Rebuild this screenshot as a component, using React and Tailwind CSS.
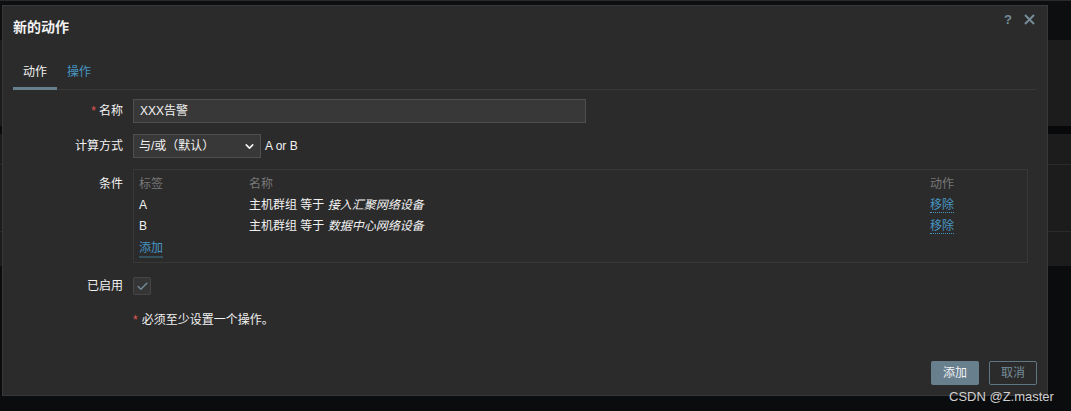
import React from 'react';
import { ChevronDown, Check } from 'lucide-react';

const font = { fontFamily: '"Liberation Sans", "Noto Sans CJK SC", sans-serif' };

const conditions = [
  { tag: 'A', value: '接入汇聚网络设备' },
  { tag: 'B', value: '数据中心网络设备' },
];

const Backdrop = () => (
  <div className="absolute inset-0 flex flex-col">
    <div className="h-px bg-[#2a2a2a]" />
    <div className="h-[39px] bg-[#0d0e10]" />
    <div className="h-[86px] bg-[#1c1c1c]" />
    <div className="h-[8px] bg-[#08090b]" />
    <div className="h-[31px] bg-[#1c1c1c] border-b border-[#2a2a2a]" />
    <div className="h-[67px] bg-[#1c1c1c] border-b border-[#2a2a2a]" />
    <div className="h-[34px] bg-[#1c1c1c]" />
    <div className="flex-1 bg-[#0b0c0e]" />
  </div>
);

const Row = ({ label, required, top, children }) => (
  <div className={`flex ${top ? 'items-start' : 'items-center'}`}>
    <div className={`w-[120px] shrink-0 pr-[10px] text-right text-[12px] text-[#f2f2f2] ${top ? 'pt-[6px]' : ''}`}>
      {required && <span className="text-[#e45959] mr-[3px]">*</span>}
      {label}
    </div>
    {children}
  </div>
);

const App = () => {
  return (
    <div className="relative h-[411px] w-[1071px] overflow-hidden bg-[#0b0c0e]" style={font}>
      <Backdrop />

      <div className="absolute left-[2px] top-[5px] w-[1046px] h-[391px] bg-[#2b2b2b] border border-[#383838] flex flex-col px-[10px]">
        <div className="h-[43px] flex items-center justify-between">
          <h2 className="text-[14px] font-bold text-[#f2f2f2]">新的动作</h2>
          <div className="flex items-center gap-[12px] -mt-[16px] mr-[2px] text-[#768d99]">
            <span className="text-[13px] font-bold">?</span>
            <svg width="11" height="11" viewBox="0 0 11 11">
              <path d="M1 1 L10 10 M10 1 L1 10" stroke="currentColor" strokeWidth="2" />
            </svg>
          </div>
        </div>

        <div className="mt-[10px] flex border-b border-[#383838] text-[12px] mr-[1px]">
          <div className="px-[10px] pt-[5px] pb-[7px] leading-[16px] text-[#f2f2f2] border-b-[3px] border-[#687f8e] -mb-px">动作</div>
          <div className="px-[10px] pt-[5px] pb-[7px] leading-[16px] text-[#4796c4]">操作</div>
        </div>

        <div className="mt-[9px] flex flex-col gap-[11px]">
          <Row label="名称" required>
            <div className="w-[453px] h-[24px] bg-[#383838] border border-[#4f4f4f] px-[6px] flex items-center text-[12px] text-[#f2f2f2]">
              XXX告警
            </div>
          </Row>

          <Row label="计算方式">
            <div className="w-[128px] h-[24px] bg-[#383838] border border-[#4f4f4f] pl-[5px] pr-[4px] flex items-center justify-between text-[12px] text-[#f2f2f2]">
              <span>与/或（默认）</span>
              <ChevronDown size={13} strokeWidth={3} className="text-[#f2f2f2]" />
            </div>
            <span className="ml-[4px] text-[12px] text-[#f2f2f2]">A or B</span>
          </Row>

          <Row label="条件" top>
            <div className="w-[895px] h-[94px] border border-[#383838] pt-[3px] pb-[6px] px-[5px] text-[12px]">
              <div className="flex h-[21px] items-center text-[#787878]">
                <span className="w-[110px]">标签</span>
                <span className="flex-1">名称</span>
                <span className="w-[92px]">动作</span>
              </div>
              {conditions.map((c) => (
                <div key={c.tag} className="flex h-[21px] items-center text-[#f2f2f2]">
                  <span className="w-[110px]">{c.tag}</span>
                  <span className="flex-1">
                    主机群组 等于 <em className="italic">{c.value}</em>
                  </span>
                  <span className="w-[92px]">
                    <span className="text-[#4796c4] border-b border-dotted border-[#4796c4]">移除</span>
                  </span>
                </div>
              ))}
              <div className="flex h-[21px] items-center pt-[5px]">
                <span className="text-[#4796c4] border-b-2 border-[#34515f] leading-[15px]">添加</span>
              </div>
            </div>
          </Row>

          <div className="mt-[3px]">
            <Row label="已启用">
              <div className="w-[18px] h-[18px] bg-[#353535] border border-[#454545] rounded-[2px] flex items-center justify-center">
                <Check size={13} strokeWidth={3} className="text-[#6f8593]" />
              </div>
            </Row>
          </div>

          <div className="mt-[5px] pl-[120px] text-[12px] text-[#f2f2f2]">
            <span className="text-[#e45959] mr-[4px]">*</span>必须至少设置一个操作。
          </div>
        </div>

        <div className="mt-auto mb-[10px] flex justify-end gap-[10px] mr-[0px]">
          <button className="w-[48px] h-[24px] bg-[#687f8e] text-[12px] text-[#f2f2f2] rounded-[2px]">添加</button>
          <button className="w-[48px] h-[24px] border border-[#5f7785] text-[12px] text-[#768d99] rounded-[2px]">取消</button>
        </div>
      </div>

      <div className="absolute left-[949px] top-[387px] text-[13px] text-[#d0d0d0]" style={{ fontFamily: '"Liberation Sans", sans-serif' }}>
        CSDN @Z.master
      </div>
    </div>
  );
};

export default App;
